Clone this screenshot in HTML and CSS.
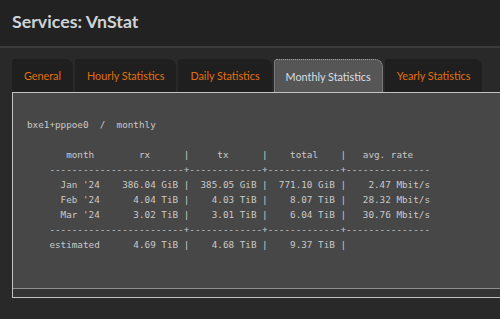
FILE: index.html
```html
<!DOCTYPE html>
<html lang="en">
<head>
  <meta charset="UTF-8" />
  <title>Services: VnStat</title>
  <link rel="stylesheet" href="styles.css">
</head>
<body>
  <div class="header">
    <h1>Services: VnStat</h1>
  </div>

  <div class="page">
    <ul class="tabs">
      <li><a href="#">General</a></li>
      <li><a href="#">Hourly Statistics</a></li>
      <li><a href="#">Daily Statistics</a></li>
      <li class="active"><a href="#">Monthly Statistics</a></li>
      <li><a href="#">Yearly Statistics</a></li>
    </ul>

    <div class="tab-panel">
<pre class="output">bxe1+pppoe0  /  monthly

       month        rx      |     tx      |    total    |   avg. rate
    ------------------------+-------------+-------------+---------------
      Jan '24    386.04 GiB |  385.05 GiB |  771.10 GiB |    2.47 Mbit/s
      Feb '24      4.04 TiB |    4.03 TiB |    8.07 TiB |   28.32 Mbit/s
      Mar '24      3.02 TiB |    3.01 TiB |    6.04 TiB |   30.76 Mbit/s
    ------------------------+-------------+-------------+---------------
    estimated      4.69 TiB |    4.68 TiB |    9.37 TiB |</pre>
      <div class="panel-foot"></div>
    </div>
  </div>
</body>
</html>
```

FILE: styles.css
```css
body {
  margin: 0;
  font-family: 'Lato', sans-serif;
  background: #292929;
  overflow: hidden;
}

.header {
  height: 46px;
  background: #222;
  border-bottom: 2px solid #3b3b3b;
  padding: 0 12px;
}

.header h1 {
  margin: 0;
  font-size: 17.8px;
  font-weight: 700;
  line-height: 43px;
  color: #cfd3d6;
}

.page {
  padding: 11px 0 0 12px;
}

.tabs {
  list-style: none;
  margin: 0;
  padding: 0;
  display: flex;
  gap: 2px;
}

.tabs li a {
  display: block;
  height: 33px;
  line-height: 34px;
  padding: 0 12px;
  box-sizing: border-box;
  font-size: 10.8px;
  white-space: nowrap;
  color: #e0700f;
  text-decoration: none;
  background: #1f1f1f;
  border-radius: 3px 8px 0 0;
}

.tabs li.active a {
  background: #565656;
  color: #d9dee2;
  border: 1px dotted #a0a0a0;
  border-bottom: none;
  line-height: 33px;
  padding: 0 11px;
}

.tab-panel {
  margin-right: -30px;
  border: 1px solid #c2c2c2;
  background: #343434;
}

.output {
  margin: 0;
  padding: 24px 14px 36px;
  background: #474747;
  border-bottom: 1px solid #8e8e8e;
  font-family: 'DejaVu Sans Mono', monospace;
  font-size: 9.3px;
  line-height: 15px;
  color: #c9c9c9;
}

.panel-foot {
  height: 8px;
}
```
